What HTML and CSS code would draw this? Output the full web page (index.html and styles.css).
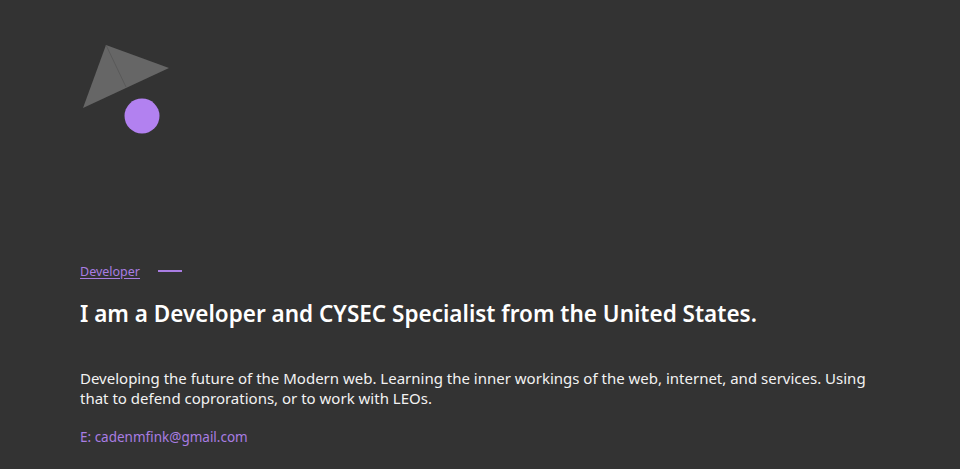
FILE: index.html
```html
<!DOCTYPE html>
<html>
<head>
<meta charset="utf-8">
<link rel="stylesheet" href="styles.css">
</head>
<body>
<div class="page">
  <div class="logo">
    <svg width="100" height="110" viewBox="0 0 100 110">
      <polygon points="26,15 89,38 3,78" fill="#666666"/>
      <line x1="26" y1="15" x2="46" y2="57" stroke="#555" stroke-width="0.8"/>
      <circle cx="62" cy="86" r="17.5" fill="#b281f0"/>
    </svg>
  </div>
  <main class="intro">
    <div class="tag">
      <a class="tag-link" href="#">Developer</a>
      <span class="tag-line"></span>
    </div>
    <h1 class="title">I am a Developer and CYSEC Specialist from the United States.</h1>
    <p class="desc">Developing the future of the Modern web. Learning the inner workings of the web, internet, and services. Using that to defend coprorations, or to work with LEOs.</p>
    <p class="email">E: cadenmfink@gmail.com</p>
  </main>
</div>
</body>
</html>
```
FILE: styles.css
```css
html, body {
  margin: 0;
  padding: 0;
  background: #333333;
  height: 100%;
}
body {
  font-family: "Noto Sans", "Liberation Sans", sans-serif;
  color: #ffffff;
}
.page {
  padding: 30px 80px 0 80px;
}
.logo {
  height: 100px;
}
.logo svg {
  display: block;
}
.intro {
  margin-top: 132px;
  width: 800px;
}
.tag {
  display: flex;
  align-items: center;
  gap: 18px;
  height: 18px;
}
.tag-link {
  color: #a97de2;
  font-size: 12.5px;
  text-decoration: underline;
  text-underline-offset: 2px;
}
.tag-line {
  width: 24px;
  height: 2px;
  background: #a97de2;
}
.title {
  font-size: 22.5px;
  font-weight: 600;
  margin: 19px 0 0 0;
  line-height: 30px;
}
.desc {
  font-size: 15px;
  line-height: 20px;
  margin: 39px 0 0 0;
  color: #f2f2f2;
}
.email {
  font-size: 13.5px;
  color: #a97de2;
  margin: 20px 0 0 0;
}
```
